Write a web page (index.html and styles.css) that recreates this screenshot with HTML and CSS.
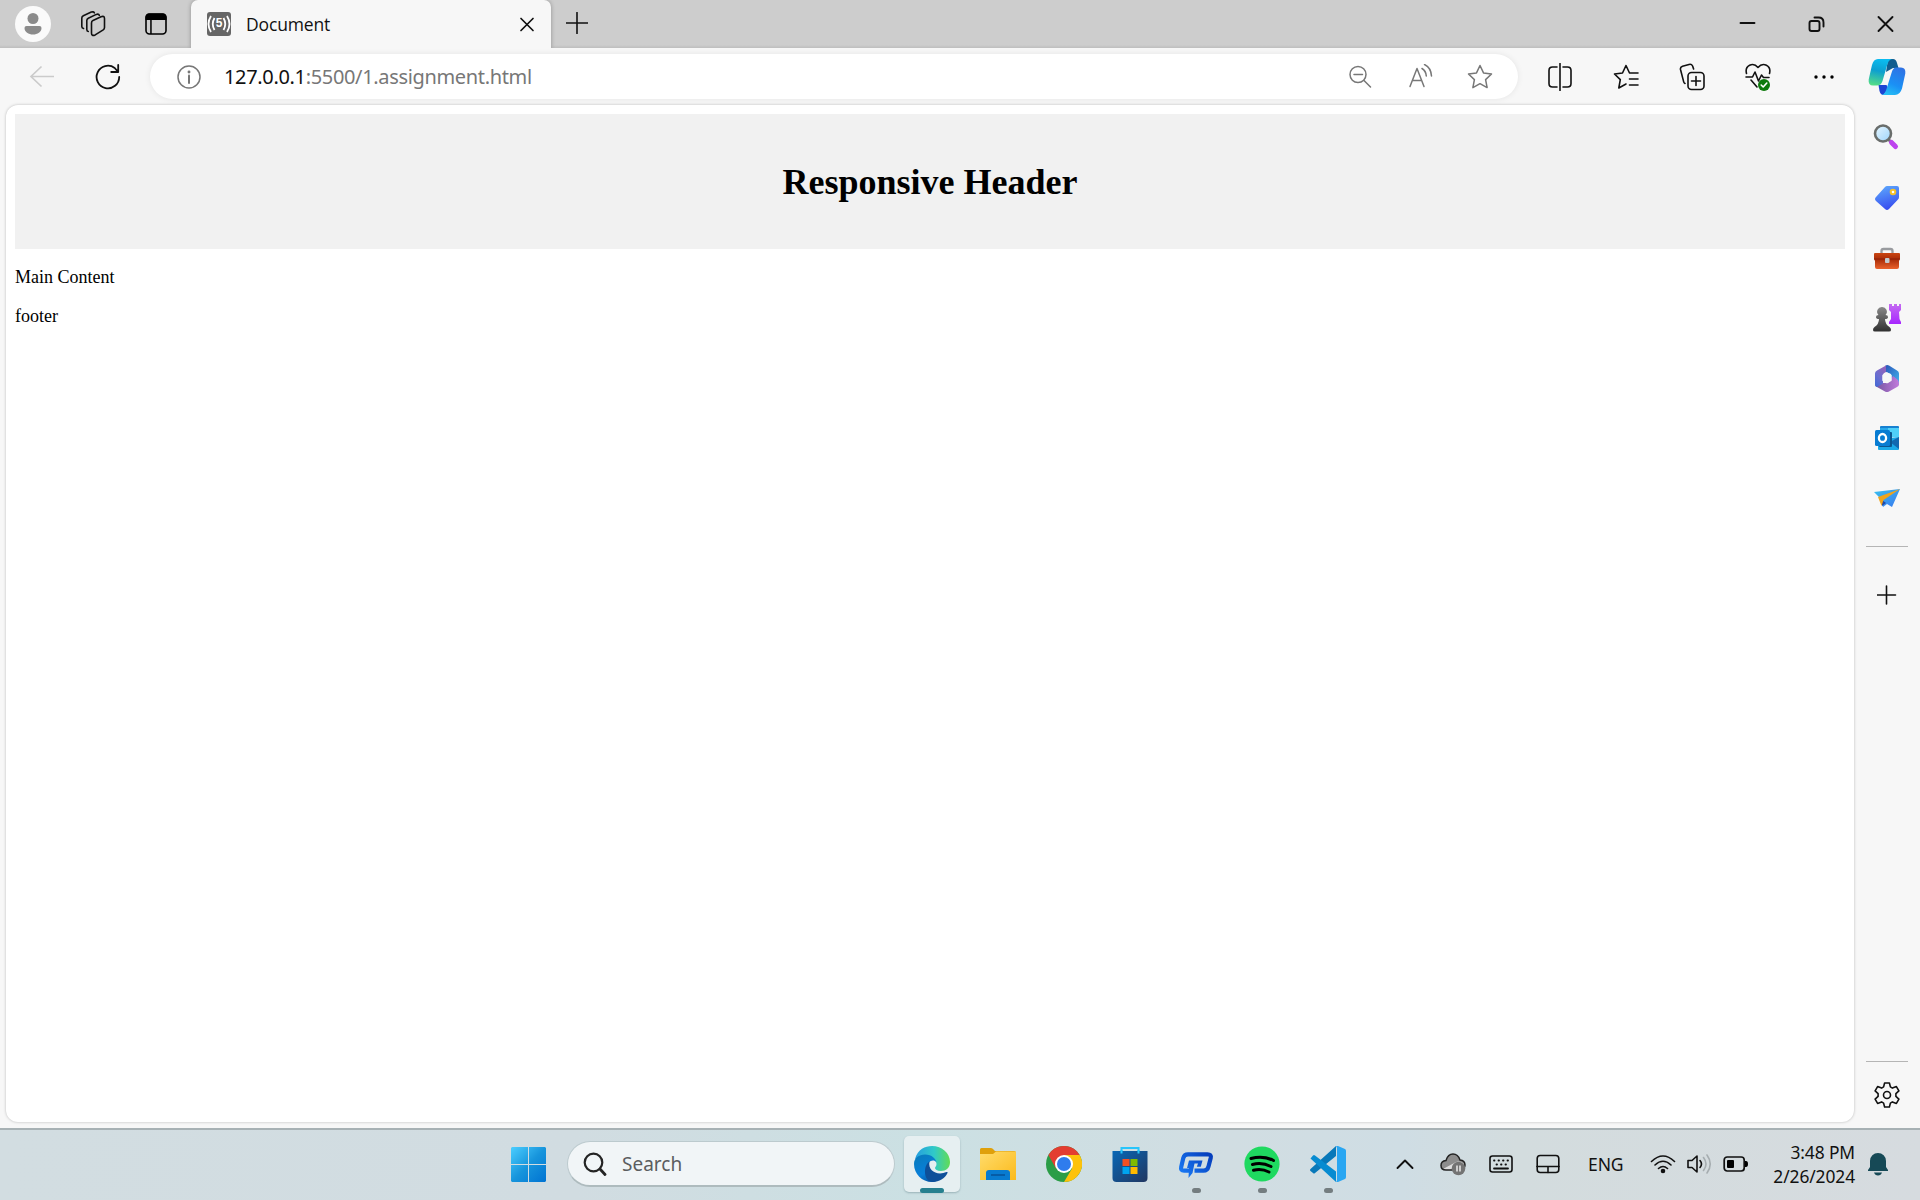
FILE: index.html
```html
<!DOCTYPE html>
<html lang="en">
<head>
<meta charset="utf-8">
<title>Document</title>
<link rel="stylesheet" href="styles.css">
</head>
<body>
<div class="screen">
  <div class="tabstrip">
    <svg class="avatar" width="36" height="36" viewBox="0 0 36 36"><circle cx="18" cy="18" r="18" fill="#fafafa"/><circle cx="18" cy="12.5" r="5.5" fill="#8b8b8b"/><path d="M11.5 20h13a2 2 0 0 1 2 2c0 4-4 6.500-8.500 6.500S9.500 26 9.500 22a2 2 0 0 1 2-2z" fill="#8b8b8b"/></svg>
    <svg class="workspaces line" width="26" height="26" viewBox="0 0 26 26"><path d="M11.500 12q0-1.800 1.500-2.600l8-3.700q3.500-1.200 3.500 1.800v9q0 1.500-1.300 2.400l-8 5q-3.700 1.500-3.700-1.600zM8.300 20.500q-1.500-.2-1.500-2V9.500q0-1.500 1.500-2.300l8-3.800q2.400-.8 3 .9M3.500 17.500Q1.800 17 1.800 15.500V7q0-1.500 1.500-2.300l8-3.600q2.400-.8 3 .7"/></svg>
    <svg class="tab-actions" width="24" height="24" viewBox="0 0 24 24"><rect x="2" y="2" width="20" height="20" rx="3.500" fill="none" stroke="#000" stroke-width="1.600"/><path d="M1.500 8V5q0-3.500 3.500-3.500h14q3.500 0 3.500 3.500v3zM6.200 8h1.500v14H6.200z"/></svg>
    <div class="tab">
      <span class="favicon"><svg width="24" height="24" viewBox="0 0 24 24" fill="none" stroke="#fff" stroke-width="1.800"><path d="M4 4q-5 8 0 16M7.500 6q-3.500 6 0 12M20 4q5 8 0 16M16.500 6q3.500 6 0 12"/></svg><b>5</b></span>
      <span class="tab-title">Document</span>
      <svg class="line" width="16" height="16" viewBox="0 0 16 16"><path d="M2 2.500l12 12M14 2.500L2 14.500" stroke-width="1.700"/></svg>
    </div>
    <svg class="new-tab line" width="22" height="22" viewBox="0 0 22 22"><path d="M11 .5v21M.5 11h21"/></svg>
    <div class="window-controls">
      <svg class="line heavy" width="18" height="18" viewBox="0 0 18 18"><path d="M2 8h14"/></svg>
      <svg class="line heavy" width="18" height="18" viewBox="0 0 18 18"><rect x="2" y="6" width="10" height="10" rx="2"/><path d="M7 2.500h4q5 0 5 5v4"/></svg>
      <svg class="line heavy" width="18" height="18" viewBox="0 0 18 18"><path d="M2 2l14 14M16 2L2 16"/></svg>
    </div>
  </div>

  <div class="toolbar">
    <svg class="back" width="26" height="24" viewBox="0 0 26 24"><path d="M25 11.500H2M12.500 1.500L2 11.500l10.500 10"/></svg>
    <svg class="reload line" width="26" height="26" viewBox="0 0 26 26"><path d="M24.200 13a11.300 11.300 0 1 1-4.500-9L23.200 8M23.200 1v7h-7" stroke-width="1.800"/></svg>
    <div class="address">
      <svg class="gray" width="24" height="24" viewBox="0 0 24 24"><circle cx="12" cy="12" r="11"/><path d="M12 10.500v7.500" stroke-width="2"/><circle cx="12" cy="7" r=".7"/></svg>
      <span class="url"><span class="host">127.0.0.1</span>:5500/1.assignment.html</span>
      <div class="address-actions">
        <svg class="gray" width="26" height="26" viewBox="0 0 26 26"><circle cx="11" cy="10.500" r="8"/><path d="M17 16.500l6.500 6.500M7 10.500h8.500"/></svg>
        <svg class="gray" width="26" height="26" viewBox="0 0 26 26"><path d="M3 22.500L10 4.500l7 18M5.400 16.500h9.200M15 4.500q4 2.500 4.300 7.500M17.500 .5q6.500 3 7 11.500"/></svg>
        <svg class="gray" width="26" height="26" viewBox="0 0 26 26"><path d="M13 1.500l3.500 7.400 8 1.100-5.900 5.600 1.500 8-7.100-3.900-7.100 3.900 1.500-8L1.500 10l8-1.100z"/></svg>
      </div>
    </div>
    <div class="tools">
      <svg class="line" width="26" height="28" viewBox="0 0 26 28"><path d="M10 4H5.500Q2 4 2 7.500v13Q2 24 5.500 24H10M16 4h4.500Q24 4 24 7.500v13Q24 24 20.500 24H16M13 .5v27"/></svg>
      <svg class="line" width="26" height="26" viewBox="0 0 26 26"><path d="M16.500 9L13 1.500 9.500 9 1.500 10l5.800 5.600-1.500 8.400 7.200-4M16.500 9h8.500M16.500 15h8.500M16.500 21h8.500"/></svg>
      <svg class="line" width="28" height="28" viewBox="0 0 28 28"><rect x="10" y="9.500" width="16" height="17" rx="3.500"/><path d="M18 13.500v9M13.500 18h9M7 20.500q-1-.5-1.300-1.600L2.500 6.500Q2 4 4.500 3.200L11 1.400q2.500-.7 3.600 1.600l1 3"/></svg>
      <svg class="line" width="28" height="28" viewBox="0 0 28 28"><path d="M2.500 10.500C.5 2.500 9-1.500 14 4.500 19-1.500 27.500 2.500 25.500 10.500M2 14h6.500L11 9l3.500 9 3-6 2 2.500h5.500M7 17l6 7"/><circle cx="20" cy="22" r="6" fill="#0e7a0d" stroke="none"/><path d="M17.200 22l2 2 3.600-4" stroke="#fff"/></svg>
      <svg width="22" height="22" viewBox="0 0 22 22"><circle cx="3" cy="11" r="1.700"/><circle cx="11" cy="11" r="1.700"/><circle cx="19" cy="11" r="1.700"/></svg>
    </div>
    <svg class="copilot" width="38" height="38" viewBox="0 0 38 38">
      <defs><linearGradient id="cp1" x1=".5" y1="0" x2=".3" y2="1"><stop offset="0" stop-color="#0bbcf0"/><stop offset=".45" stop-color="#0d9fd0"/><stop offset="1" stop-color="#54dd87"/></linearGradient><linearGradient id="cp2" x1=".7" y1="0" x2=".3" y2="1"><stop offset="0" stop-color="#2f73e4"/><stop offset=".6" stop-color="#1a90f5"/><stop offset="1" stop-color="#25bdf4"/></linearGradient></defs>
      <path d="M20 1h5q3 0 4 4l1.500 5H25l-7 4z" fill="#125d8f"/><path d="M10.500 27h8l2 4-5 6q-3 0-4-4z" fill="#1d45d3"/><path d="M10 1h15q-4 0-5.500 5l-5 17q-1.500 4.500-5.500 4.500H5q-5 0-4.300-6L4 7q1.500-6 6-6z" fill="url(#cp1)"/><path d="M28 9.500h5q5 0 4.300 6L34 30.500Q32 37 27 37H14q3-1 4.500-6l5-16q1.500-5.500 4.500-5.500z" fill="url(#cp2)"/>
    </svg>
  </div>

  <div class="workspace">
    <div class="page">
      <header class="page-header"><h1>Responsive Header</h1></header>
      <p>Main Content</p>
      <p>footer</p>
    </div>
    <aside class="sidebar">
      <div class="side-item search-item"><svg width="28" height="28" viewBox="0 0 28 28"><defs><linearGradient id="lens" x1="0" y1="0" x2="1" y2="1"><stop stop-color="#e7f6ff"/><stop offset="1" stop-color="#9dd5fb"/></linearGradient></defs><path d="M16 16l4 4" stroke="#777" stroke-width="3"/><path d="M19.500 19.500l4 4" stroke="#bd43ee" stroke-width="5" stroke-linecap="round"/><circle cx="11" cy="10.500" r="8" fill="url(#lens)" stroke="#696d6b" stroke-width="2.600"/></svg></div>
      <div class="side-item"><svg width="28" height="28" viewBox="0 0 28 28"><defs><linearGradient id="tag" x1=".3" y1="0" x2=".6" y2="1"><stop stop-color="#5ca6fc"/><stop offset="1" stop-color="#3649ef"/></linearGradient></defs><path d="M14 2h10q2 0 2 2v9q0 1.500-1 2.500l-9 9.500q-2 2-4 0L3 17q-2-2 0-4l9-10q1-1 2-1z" fill="url(#tag)"/><circle cx="20" cy="8" r="2.300" fill="#fff" stroke="#f5c12a" stroke-width="2"/></svg></div>
      <div class="side-item"><svg width="28" height="28" viewBox="0 0 28 28"><defs><linearGradient id="box" x2="0" y2="1"><stop stop-color="#ca4511"/><stop offset=".4" stop-color="#a92d09"/><stop offset="1" stop-color="#ea622c"/></linearGradient></defs><g transform="translate(0 1)"><path d="M8.500 11V6q0-2 2-2h7q2 0 2 2v5" fill="none" stroke="#999b9f" stroke-width="2.300"/><path d="M2 8h24q1 0 1 1v5l-1 2v6q0 2-2 2H4q-2 0-2-2v-6l-1-2V9q0-1 1-1z" fill="url(#box)"/><path d="M1 14h26" stroke="#8e2109"/><rect x="12" y="13" width="4.500" height="5" rx="1" fill="#c3cace"/></g></svg></div>
      <div class="side-item"><svg width="30" height="30" viewBox="0 0 30 30"><defs><linearGradient id="rook" x2="0" y2="1"><stop stop-color="#c46bf1"/><stop offset="1" stop-color="#a726ff"/></linearGradient><linearGradient id="pawn" x2="0" y2="1"><stop stop-color="#898989"/><stop offset="1" stop-color="#303030"/></linearGradient></defs><path d="M17 1h3v2h2V1h3v2h2V1h2v6l-2 2 .5 7 1.500 3v2H17v-2l2-3V9l-2-2z" fill="url(#rook)"/><path d="M10 4a4.700 4.700 0 0 1 3.500 8q2.500 0 2.500 2t-3 2q0 5 4.500 8 1.500 1 1.500 3 0 1.500-2 1.500H3Q1 28.500 1 27q0-2 1.500-3 4.500-3 4.500-8-3 0-3-2t2.500-2A4.700 4.700 0 0 1 10 4z" fill="url(#pawn)"/></svg></div>
      <div class="side-item"><svg width="26" height="28" viewBox="0 0 26 28"><defs><linearGradient id="m1" x1=".6" x2="0" y2="1"><stop stop-color="#8f63bc"/><stop offset=".5" stop-color="#6a6ed0"/><stop offset="1" stop-color="#3f67d6"/></linearGradient><linearGradient id="m2" x2="1" y2="1"><stop stop-color="#2a55b8"/><stop offset="1" stop-color="#43b6ef"/></linearGradient><linearGradient id="m3" x2="1"><stop stop-color="#72559f"/><stop offset="1" stop-color="#c17bdb"/></linearGradient></defs><path d="M11 2q2-1.500 4-.5l8 5q2 1 2 3V21l-8-4V10l-5-2z" fill="url(#m2)"/><path d="M25 20.500q0 1.500-2 2.500l-8 4.500q-2 1-4 0L3 23q-2-1-2-2.500L9 19h5l5-7 5 4q1 1 1 4.500z" fill="url(#m3)"/><path d="M12 1.500L3 6.500Q1 7.500 1 9.500v11q0 2 2 2.500l6-3.500V11q0-2 3-3z" fill="url(#m1)"/><path d="M13 9.200l4 2.300v4.800l-4 2.400-4-2.400v-4.800z" fill="#f7f7f7" stroke="#f7f7f7" stroke-width="1.500" stroke-linejoin="round"/></svg></div>
      <div class="side-item"><svg width="26" height="26" viewBox="0 0 26 26"><path d="M7 1h17q1 0 1 1v10H6V2q0-1 1-1z" fill="#1781d1"/><path d="M6 3h8v5H6z" fill="#28a8ea"/><path d="M14 3h11v9H14z" fill="#50d0f8"/><path d="M4 14l21-2v12q0 1-1 1H5q-1 0-1-1z" fill="#1ba9e8"/><path d="M16 17l9-5v12z" fill="#1268b0"/><rect x="5" y="7" width="13" height="15" rx="1" fill="#0c568f"/><rect x="1" y="5" width="15" height="16" rx="1.500" fill="#087cd2"/><ellipse cx="8.500" cy="13" rx="3.600" ry="4" fill="none" stroke="#fff" stroke-width="2.300"/></svg></div>
      <div class="side-item"><svg width="28" height="26" viewBox="0 0 28 26"><defs><linearGradient id="plane" x2="1" y2="1"><stop stop-color="#39c1ef"/><stop offset="1" stop-color="#3978ef"/></linearGradient></defs><path d="M1 7l26-3-8 18-5-3-4 3-3-9z" fill="url(#plane)"/><path d="M9 15l4 3-4 3z" fill="#2349a8"/><path d="M5 12L27 4 10.500 15 8.500 21z" fill="#efa41c"/></svg></div>
      <div class="side-divider"></div>
      <svg class="side-add line" width="20" height="20" viewBox="0 0 20 20"><path d="M9.500 1v18M.5 10h18"/></svg>
      <div class="side-divider bottom"></div>
      <svg class="line gear" width="26" height="28" viewBox="0 0 26 28"><path d="M10.600 2h4.800l1 3.900 2 1.200 4-1.500 2.500 4.200-3 2.800v2.800l3 2.800-2.500 4.200-4-1.500-2 1.200-1 3.900h-4.800l-1-3.900-2-1.200-4 1.500-2.500-4.200 3-2.800v-2.800l-3-2.800 2.500-4.200 4 1.500 2-1.200z"/><circle cx="13" cy="14" r="3.500"/></svg>
    </aside>
  </div>

  <div class="taskbar">
    <svg class="start" width="35" height="35" viewBox="0 0 35 35"><defs><linearGradient id="win" gradientUnits="userSpaceOnUse" x1="0" y1="0" x2="35" y2="35"><stop stop-color="#4cceff"/><stop offset=".5" stop-color="#1795dc"/><stop offset="1" stop-color="#0073d2"/></linearGradient></defs><path d="M1 0h16v17H0V1zM18 0h16l1 1v16H18zM0 18h17v17H1l-1-1zM18 18h17v16l-1 1H18z" fill="url(#win)"/></svg>
    <div class="search"><svg width="24" height="24" viewBox="0 0 24 24" fill="none" stroke="#242424" stroke-width="2.200" stroke-linecap="round"><circle cx="10.500" cy="10.500" r="8.800"/><path d="M17 17l5 5.500" stroke-width="2.800"/></svg><span>Search</span></div>
    <div class="apps">
      <div class="app active"><svg width="36" height="36" viewBox="0 0 36 36"><defs><linearGradient id="e1" x1="0" x2="1"><stop stop-color="#259de0"/><stop offset=".55" stop-color="#30c9c8"/><stop offset="1" stop-color="#62dc55"/></linearGradient><linearGradient id="e2" x2=".5" y2="1"><stop stop-color="#087bb9"/><stop offset=".7" stop-color="#087fda"/><stop offset="1" stop-color="#075dac"/></linearGradient></defs><path d="M1 13C4 3 11 0 18 0c10 0 18 7 18 16 0 6-4 9-9 9-4 0-6-1.500-6-3 0-1 1.500-1.500 1.500-4 0-4-5-7-11-7-4 0-8 1-10.500 2z" fill="url(#e1)"/><path d="M0 18C0 12 5 8.500 11 8.500c7 0 11 4.500 11.500 8-2-3-6-2-7.500 0-3 4-1 15 12 15-3 3-6 4.500-9 4.500C8 36 0 28 0 18z" fill="url(#e2)"/><path d="M15.500 15.500C9 19 9 36 19 36c6 0 12-3.500 14.500-9q.5-1.500-1-1c-9 4-19-1-17-10.500z" fill="#0e4f99"/></svg></div>
      <div class="app"><svg width="36" height="36" viewBox="0 0 36 36"><defs><linearGradient id="fold" x2="1" y2="1"><stop stop-color="#ffdc6c"/><stop offset="1" stop-color="#fbba1b"/></linearGradient></defs><path d="M0 3.500Q0 2 1.500 2H11q1.500 0 2.500 1.500L15 5h19q2 0 2 2v8H0z" fill="#dfa00b"/><path d="M0 8h13l3-2.500h20V34H0z" fill="url(#fold)"/><path d="M6 34v-7q0-3 3-3h18q3 0 3 3v7z" fill="#087bd0"/><path d="M11 29h14" stroke="#07559b" stroke-width="1.600"/></svg></div>
      <div class="app"><svg width="36" height="36" viewBox="0 0 36 36"><circle cx="18" cy="18" r="18" fill="#2b9d47"/><path d="M18 9h15.600A18 18 0 0 1 18 36l8-13.500z" fill="#fdc20b"/><path d="M2.400 9a18 18 0 0 1 31.200 0H18l-8 13.500z" fill="#e33d31"/><circle cx="18" cy="18" r="9" fill="#fff"/><circle cx="18" cy="18" r="7" fill="#2f7ced"/></svg></div>
      <div class="app"><svg width="36" height="36" viewBox="0 0 36 36"><defs><linearGradient id="store" x2="1" y2="1"><stop stop-color="#0867b6"/><stop offset="1" stop-color="#213761"/></linearGradient></defs><path d="M9.500 7V2h17v5" fill="none" stroke="#27c5fb" stroke-width="2"/><path d="M.5 5h35v27q0 4-4 4h-27q-4 0-4-4z" fill="url(#store)"/><path d="M9.500 4v3.500M26.500 4v3.500" stroke="#27c5fb" stroke-width="2"/><path d="M10.500 13h7v7h-7z" fill="#f25022"/><path d="M18.500 13h7v7h-7z" fill="#7fba00"/><path d="M10.500 21h7v7h-7z" fill="#00a4ef"/><path d="M18.500 21h7v7h-7z" fill="#ffb900"/></svg></div>
      <div class="app running"><svg width="36" height="36" viewBox="0 0 36 36"><defs><linearGradient id="gp" gradientUnits="userSpaceOnUse" x1="28" y1="6" x2="4" y2="30"><stop stop-color="#063fbd"/><stop offset="1" stop-color="#1b7cf7"/></linearGradient></defs><path d="M12.500 24.700H6Q2.300 24.700 3.200 21L5.300 12Q6.200 8.300 10 8.300h19.500q4 0 3.200 3.700l-2.200 8.500q-1 4.200-5 4.200H16.500" fill="none" stroke="url(#gp)" stroke-width="4.200"/><path d="M11 14.500h13.500l-1.700 6.200h-4L20 17.500h-3.500L14.500 27l-4 5 .5-10H9z" fill="url(#gp)"/></svg></div>
      <div class="app running"><svg width="36" height="36" viewBox="0 0 36 36"><circle cx="18" cy="18" r="17.600" fill="#1fd960"/><path d="M7 12.500q12-3.500 22.500 2M8.500 18.500q9.500-2.500 18.500 2M9.500 24.300q8-2 15.500 1.700" fill="none" stroke="#000" stroke-width="3" stroke-linecap="round"/></svg></div>
      <div class="app running"><svg width="36" height="36" viewBox="0 0 36 36"><path d="M26 0v10L5 27q-1 1-2 0L.5 25q-1-1 0-2z" fill="#0878b9"/><path d="M.5 12.500L3 9.500q1-1 2 0l21 16V36z" fill="#078bd1"/><path d="M26 0q1-.5 2 0l7 3q1 .5 1 2v26q0 1.500-1 2l-7 3q-1 .5-2 0 1-1 1-2V2z" fill="#29a6f2"/></svg></div>
    </div>
    <div class="tray">
      <svg class="t-chevron line heavy" width="20" height="12" viewBox="0 0 20 12"><path d="M2.500 10l7.500-7.500 7.500 7.500"/></svg>
      <svg class="t-cloud" width="26" height="24" viewBox="0 0 26 24"><path d="M6 18q-5 0-5-4.500Q1 9 6 8.500 8 2 13 2t7 6q5 .5 5 5 0 4-5 5z" fill="#8d8d8d"/><path d="M3 17L16 10q4-1.500 8 2v4l-5 2H6q-2 0-3-1z" fill="#dcdcdc"/><path d="M6 18q-5 0-5-4.500Q1 9 6 8.500 8 2 13 2t7 6q5 .5 5 5 0 4-5 5z" fill="none" stroke="#222" stroke-width="1.500"/><circle cx="18.500" cy="16.500" r="6.800" fill="#737373"/><path d="M17 13.500v6M20 13.500v6" stroke="#fff" stroke-width="1.300"/></svg>
      <svg class="t-keys line" width="24" height="18" viewBox="0 0 24 18"><rect x="1" y="1" width="22" height="16" rx="2.500"/><path d="M5 5.500h.5M9.500 5.500h.5M14 5.500h.5M18.500 5.500h.5M7.500 9.500h.5M12 9.500h.5M16.500 9.500h.5M5 13.500h14" stroke-width="1.800"/></svg>
      <svg class="t-pad line" width="24" height="20" viewBox="0 0 24 20"><rect x="1.200" y="1.500" width="21.600" height="17" rx="3"/><path d="M1 12.500h22M12 12.500v6"/></svg>
      <span class="lang">ENG</span>
      <svg class="t-wifi line" width="26" height="20" viewBox="0 0 26 20"><path d="M1.500 7.500q11.500-11 23 0M5 11q8-7.500 16 0M8.500 14.500q4.500-4 9 0"/><circle cx="13" cy="17" r="1.500" fill="#111"/></svg>
      <svg class="t-sound line" width="26" height="22" viewBox="0 0 26 22"><path d="M2 7.500h4L11 3v16l-5-4.500H2z"/><path d="M14 7.500q3 3.500 0 7"/><path d="M17.500 4.500q5 6.500 0 13M21 2q6.500 9 0 18" stroke="#a6adb0"/></svg>
      <svg class="t-batt" width="25" height="18" viewBox="0 0 25 18"><rect x="1.200" y="2" width="20" height="14" rx="3" fill="none" stroke="#111" stroke-width="1.700"/><rect x="4" y="5" width="7" height="8" rx="1"/><path d="M22 6h1q2 0 2 3t-2 3h-1z"/></svg>
      <div class="clock"><span class="time">3:48 PM</span><span class="date">2/26/2024</span></div>
      <svg class="t-bell" width="20" height="24" viewBox="0 0 20 24"><path d="M10 1a8 8 0 0 1 8 8v6l2 3v1H0v-1l2-3V9a8 8 0 0 1 8-8zM6 20.500h8q-1 3-4 3t-4-3z" fill="#164956"/></svg>
    </div>
  </div>
</div>
</body>
</html>
```
FILE: styles.css
```css
* { box-sizing: border-box; }
body { margin: 0; font-family: "Noto Sans", "Open Sans", sans-serif; }
svg { display: block; flex: none; }
.screen { width: 1920px; height: 1200px; display: flex; flex-direction: column; overflow: hidden; background: #f7f7f7; }
.line { fill: none; stroke: #111; stroke-width: 1.6; stroke-linejoin: round; stroke-linecap: round; }
.heavy { stroke-width: 1.9; }
.gray { fill: none; stroke: #777; stroke-width: 1.5; stroke-linejoin: round; stroke-linecap: round; }

.tabstrip { height: 48px; flex: none; display: flex; align-items: center; background: linear-gradient(#cdcdcd 45px, #bdbdbd); padding-left: 15px; }
.workspaces { margin-left: 29px; }
.tab-actions { margin-left: 38px; }
.tab { margin-left: 23px; width: 360px; height: 48px; background: #f7f7f7; border-radius: 7px 7px 0 0; display: flex; align-items: center; padding: 0 16px; box-shadow: 0 0 4px rgba(0, 0, 0, .3); clip-path: inset(0 -5px 0 -5px); }
.favicon { position: relative; width: 24px; height: 24px; border-radius: 3px; background: #666; color: #fff; }
.favicon b { position: absolute; inset: 0; font: bold 12px/23px "Liberation Sans", sans-serif; text-align: center; }
.tab-title { flex: 1; margin-left: 15px; font-family: "Open Sans", sans-serif; font-size: 17.5px; line-height: 24px; letter-spacing: -.15px; color: #111; }
.new-tab { margin-left: 15px; margin-top: -2px; }
.window-controls { margin-left: auto; display: flex; }
.window-controls svg { width: 69px; }

.toolbar { height: 57px; flex: none; display: flex; align-items: center; padding-left: 29px; }
.back { fill: none; stroke: #cbcbcb; stroke-width: 1.7; }
.reload { margin-left: 40px; }
.address { margin-left: 29px; width: 1368px; height: 45px; border-radius: 23px; background: #fff; box-shadow: 0 0 6px rgba(0, 0, 0, .08); display: flex; align-items: center; padding: 0 25px 0 27px; }
.url { flex: 1; margin-left: 23px; font-size: 20px; letter-spacing: -.34px; color: #777; white-space: nowrap; }
.host { color: #111; }
.address-actions { display: flex; gap: 34px; }
.tools { margin-left: 9px; display: flex; align-items: center; }
.tools svg { width: 66px; }
.copilot { margin-left: 11px; }

.workspace { flex: 1; display: flex; min-height: 0; padding-left: 6px; }
.page { width: 1848px; height: 1017px; background: #fff; border-radius: 12px; box-shadow: 0 0 3px rgba(0, 0, 0, .25); padding: 9px; font: 18px/21px "Liberation Serif", serif; color: #000; }
.page-header { height: 135px; background: #f1f1f1; text-align: center; padding-top: 48px; }
.page h1 { margin: 0; font-size: 36px; line-height: 41px; }
.page p { margin: 18px 0; }

.sidebar { width: 66px; display: flex; flex-direction: column; align-items: center; padding-top: 3px; }
.side-item { height: 60px; display: flex; align-items: center; }
.search-item { padding: 0 2px 3px 0; }
.side-divider { width: 42px; height: 1px; background: #b5b5b5; margin-top: 18px; }
.side-add { margin-top: 38px; }
.side-divider.bottom { margin-top: auto; }
.gear { margin: 19px 0 19px; }

.taskbar { height: 72px; flex: none; border-top: 2px solid #a7b1b4; background: linear-gradient(90deg, #d2dde1 0, #d1dce1 30%, #cbe0e3 48%, #d1dde2 64%, #cfdde4 73%, #d3dcde 79%, #d6dbdf 100%); display: flex; align-items: center; padding: 0 0 2px 511px; }
.search { margin-left: 21px; width: 328px; height: 46px; border: 1px solid #bccace; border-bottom: 2px solid #aebbbe; border-radius: 23px; background: #f1f5f7; display: flex; align-items: center; padding-left: 15px; }
.search span { margin-left: 15px; font-size: 19px; color: #5b5d5f; }
.apps { display: flex; gap: 10px; margin-left: 9px; }
.app { position: relative; width: 56px; height: 56px; display: flex; align-items: center; justify-content: center; border-radius: 5px; }
.active { background: #e6eff1; box-shadow: 0 1px 2px rgba(80, 110, 120, .4); }
.active::after, .running::after { content: ""; position: absolute; bottom: -1px; height: 5px; width: 9px; border-radius: 3px; background: #747d80; }
.active::after { width: 24px; background: #26808f; }
.tray { display: flex; align-items: center; flex: 1; }
.t-chevron { margin-left: 39px; }
.t-cloud { margin-left: 25px; }
.t-keys { margin-left: 23px; }
.t-pad { margin-left: 23px; }
.lang { margin-left: 28px; width: 36px; font-size: 17.5px; letter-spacing: -.1px; color: #111; }
.t-wifi { margin-left: 26px; }
.t-sound { margin-left: 10px; }
.t-batt { margin-left: 11px; }
.clock { width: 107px; display: flex; flex-direction: column; align-items: flex-end; font-size: 17.4px; line-height: 24px; letter-spacing: -.1px; color: #111; white-space: nowrap; }
.t-bell { margin-left: 13px; }
```
